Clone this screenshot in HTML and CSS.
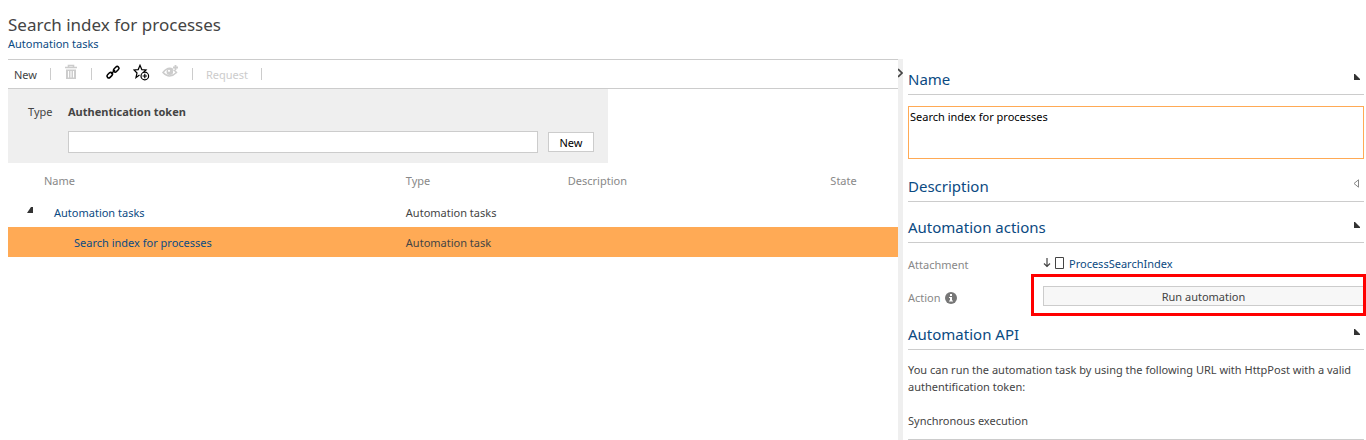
FILE: index.html
```html
<!DOCTYPE html>
<html lang="en">
<head>
<meta charset="utf-8">
<title>Search index for processes</title>
<link rel="stylesheet" href="styles.css">
</head>
<body>
<header class="page-header">
  <h1 class="page-title">Search index for processes</h1>
  <a class="crumb" href="#">Automation tasks</a>
</header>
<div class="workspace">
  <main class="list-pane">
    <div class="toolbar">
      <button class="tool" type="button">New</button>
      <span class="sep"></span>
      <button class="tool off" type="button" aria-label="Delete" disabled><svg width="14" height="16" viewBox="0 0 14 16"><path d="M1 3.500h12M4.500 3V1.500h5V3" fill="none" stroke="currentColor" stroke-width="1.600"/><path d="M2 5.500h10V15H2z" fill="currentColor"/><path d="M4.500 7v6.500M7 7v6.500M9.500 7v6.500" stroke="#fff" stroke-width="1.100"/></svg></button>
      <span class="sep"></span>
      <span class="icons">
        <button class="tool" type="button" aria-label="Copy link"><svg width="16" height="16" viewBox="0 0 16 16" fill="none" stroke="currentColor" stroke-width="1.500"><rect x="8" y="3.500" width="6.400" height="3.600" rx="1.800" transform="rotate(-45 11.200 5.300)"/><rect x="1.600" y="9.300" width="6.400" height="3.600" rx="1.800" transform="rotate(-45 4.800 11.100)"/><path d="M6 10l4-4"/></svg></button>
        <button class="tool" type="button" aria-label="Add favourite"><svg width="17" height="17" viewBox="0 0 17 17" fill="none" stroke="currentColor" stroke-width="1.200"><path d="M6.500 11L3 13.500l1-4.500L1 6l4.200-.4L7 1.300l1.800 4.300L13 6l-2.200 2"/><circle cx="11.800" cy="12" r="3.800"/><path d="M11.800 9.800v4.400M9.600 12h4.400"/></svg></button>
        <button class="tool off" type="button" aria-label="Watch" disabled><svg width="17" height="16" viewBox="0 0 17 16"><path d="M1 8.500Q7.500 0 14.500 8.500 7.500 15.500 1 8.500z" fill="none" stroke="currentColor" stroke-width="1.500"/><circle cx="7.800" cy="7.800" r="3.300" fill="currentColor"/><circle cx="7" cy="6.800" r="1.100" fill="#fff"/><path d="M13.500 1v5M11 3.500h5" stroke="#fff" stroke-width="4"/><path d="M13.500 1v5M11 3.500h5" stroke="currentColor" stroke-width="1.800"/></svg></button>
      </span>
      <span class="sep"></span>
      <button class="tool off" type="button" disabled>Request</button>
      <span class="sep"></span>
    </div>
    <form class="filter">
      <span>Type</span>
      <label class="filter-name" for="token">Authentication token</label>
      <input class="filter-input" id="token" type="text">
      <button class="filter-new" type="button">New</button>
    </form>
    <table class="tasks">
      <colgroup><col class="col-name"><col class="col-type"><col class="col-desc"><col></colgroup>
      <thead>
        <tr><th class="name-head">Name</th><th>Type</th><th>Description</th><th>State</th></tr>
      </thead>
      <tbody>
        <tr><td><div class="parent"><button class="toggle" type="button" aria-label="Collapse"><svg width="6" height="6" viewBox="0 0 6 6"><path d="M0 6L4 0h2v6z" fill="#333"/></svg></button><a href="#">Automation tasks</a></div></td><td>Automation tasks</td><td></td><td></td></tr>
        <tr class="selected"><td><a class="child" href="#">Search index for processes</a></td><td>Automation task</td><td></td><td></td></tr>
      </tbody>
    </table>
  </main>
  <div class="splitter"><button class="toggle" type="button" aria-label="Collapse panel"><svg width="5" height="10" viewBox="0 0 5 10"><path d="M0 1l4 4-4 4" fill="none" stroke="#444" stroke-width="1.700"/></svg></button></div>
  <aside class="details">
    <section class="section first">
      <div class="section-head"><h2><label for="name">Name</label></h2><button class="toggle" type="button" aria-label="Collapse Name"><svg width="6" height="6" viewBox="0 0 6 6"><path d="M0 0h1l5 5v1H0z" fill="#333"/></svg></button></div>
      <textarea class="name-input" id="name">Search index for processes</textarea>
    </section>
    <section class="section">
      <div class="section-head"><h2>Description</h2><button class="toggle closed" type="button" aria-label="Expand Description"><svg width="6" height="9" viewBox="0 0 6 9"><path d="M5.500.8v7.400L1 4.500z" fill="none" stroke="#888"/></svg></button></div>
    </section>
    <section class="section">
      <div class="section-head"><h2>Automation actions</h2><button class="toggle" type="button" aria-label="Collapse Automation actions"><svg width="6" height="6" viewBox="0 0 6 6"><path d="M0 0h1l5 5v1H0z" fill="#333"/></svg></button></div>
      <div class="field attachment">
        <span class="field-label">Attachment</span>
        <span class="file"><svg width="8" height="10" viewBox="0 0 8 10"><path d="M4 0v9M1 5.500l3 3 3-3" fill="none" stroke="#444" stroke-width="1.200"/></svg><svg width="9" height="12" viewBox="0 0 9 12"><path d="M.5.5h8v11h-8z" fill="none" stroke="#444"/></svg><a href="#">ProcessSearchIndex</a></span>
      </div>
      <div class="field action">
        <span class="field-label">Action <svg width="12" height="12" viewBox="0 0 12 12"><circle cx="6" cy="6" r="6" fill="#777"/><path d="M5 2h2v2H5zM4 5h3v3.500h1v1H4v-1h1V6H4z" fill="#fff"/></svg></span>
        <button class="run" type="button">Run automation</button>
        <span class="highlight"></span>
      </div>
    </section>
    <section class="section">
      <div class="section-head"><h2>Automation API</h2><button class="toggle" type="button" aria-label="Collapse Automation API"><svg width="6" height="6" viewBox="0 0 6 6"><path d="M0 0h1l5 5v1H0z" fill="#333"/></svg></button></div>
      <p class="api-text">You can run the automation task by using the following URL with HttpPost with a valid authentification token:</p>
      <p class="api-text">Synchronous execution</p>
      <div class="code-box"></div>
    </section>
  </aside>
</div>
</body>
</html>
```
FILE: styles.css
```css
* {
  box-sizing: border-box;
}

body {
  margin: 0;
  height: 100vh;
  display: flex;
  flex-direction: column;
  overflow: hidden;
  background: #fff;
  color: #444;
  font: 11px/17px "Noto Sans", "Open Sans", sans-serif;
}

button,
input,
textarea {
  font: inherit;
  color: inherit;
}

svg {
  display: block;
}

a {
  color: #0b4a82;
  text-decoration: none;
}

.page-header {
  padding: 14px 8px 8px;
}

.page-title {
  margin: 0;
  font-size: 17px;
  line-height: 22px;
  font-weight: 400;
}

.crumb {
  display: block;
  line-height: 15px;
}

.workspace {
  flex: 1;
  min-height: 0;
  display: grid;
  grid-template-columns: minmax(0, 890fr) 5px minmax(0, 463fr);
  padding-left: 8px;
}

.toolbar {
  display: flex;
  align-items: center;
  gap: 13px;
  height: 30px;
  padding: 0 6px;
  border: solid #ccc;
  border-width: 1px 0;
}

.tool {
  padding: 0;
  border: 0;
  background: none;
}

.off {
  color: #ccc;
}

.icons {
  display: flex;
  align-items: center;
  gap: 12px;
  color: #000;
}

.tool:has(svg) {
  padding-bottom: 4px;
}

.sep {
  width: 1px;
  height: 12px;
  background: #ccc;
}

.filter {
  display: grid;
  grid-template-columns: 30px minmax(0, 1fr) 46px;
  column-gap: 10px;
  row-gap: 11px;
  align-items: center;
  max-width: 600px;
  padding: 14px 14px 10px 20px;
  background: #efefef;
}

.filter-name {
  grid-column: 2 / 4;
  font-weight: 700;
}

.filter-input {
  grid-column: 2;
  height: 22px;
  border: 1px solid #ccc;
  background: #fff;
}

.filter-new {
  height: 20px;
  padding: 0;
  border: 1px solid #ccc;
  background: #fff;
  color: #000;
}

.tasks {
  width: 100%;
  table-layout: fixed;
  border-collapse: collapse;
}

.col-name {
  width: 44.7%;
}

.col-type {
  width: 18.2%;
}

.col-desc {
  width: 29.5%;
}

.tasks th,
.tasks td {
  height: 30px;
  padding: 0;
  text-align: left;
}

.tasks th {
  height: 34px;
  color: #888;
  font-weight: 400;
}

.tasks .name-head {
  padding-left: 36px;
}

.parent {
  display: flex;
  align-items: center;
  gap: 21px;
  padding-left: 19px;
}

.child {
  padding-left: 66px;
}

.selected {
  background: #ffaa55;
}

.toggle {
  padding: 0 0 5px;
  border: 0;
  background: none;
}

.splitter {
  padding-top: 6px;
  background: #efefef;
}

.details {
  display: flex;
  flex-direction: column;
  min-height: 0;
  padding: 0 2px 0 5px;
}

.section {
  flex: none;
  padding-top: 13px;
}

.section:last-child {
  display: flex;
  flex-direction: column;
  flex: 1;
  min-height: 0;
}

.first {
  padding: 8px 0 2px;
}

.section-head {
  display: flex;
  flex: none;
  align-items: center;
  justify-content: space-between;
  height: 28px;
  padding: 0 4px 3px 0;
  border-bottom: 1px solid #ccc;
}

.section-head h2 {
  margin: 0;
  color: #0b4a82;
  font-size: 15px;
  line-height: 24px;
  font-weight: 400;
}

.closed {
  padding-right: 1px;
}

.name-input {
  display: block;
  width: 100%;
  height: 53px;
  margin-top: 11px;
  padding: 1px;
  border: 1px solid #ffaa55;
  outline: 0;
  resize: none;
  color: #000;
}

.field {
  position: relative;
  display: grid;
  grid-template-columns: 135px minmax(0, 1fr);
  align-items: center;
}

.field-label {
  display: flex;
  align-items: center;
  gap: 4px;
  padding-top: 3px;
  color: #888;
}

.attachment {
  padding: 10px 0;
}

.file {
  display: flex;
  align-items: center;
  gap: 4px;
}

.file a {
  padding-left: 1px;
}

.action {
  padding: 3px 0;
}

.run {
  height: 20px;
  padding: 0;
  border: 1px solid #ccc;
  background: #f7f7f7;
}

.highlight {
  position: absolute;
  inset: -9px -2px -7px 123px;
  border: 3px solid #f00;
  pointer-events: none;
}

.api-text {
  margin: 11px 0 6px;
}

.code-box {
  flex: 1;
  margin-top: 4px;
  border: 1px solid #ccc;
  border-bottom: 0;
  border-radius: 4px 4px 0 0;
  background: #f7f7f7;
}
```
